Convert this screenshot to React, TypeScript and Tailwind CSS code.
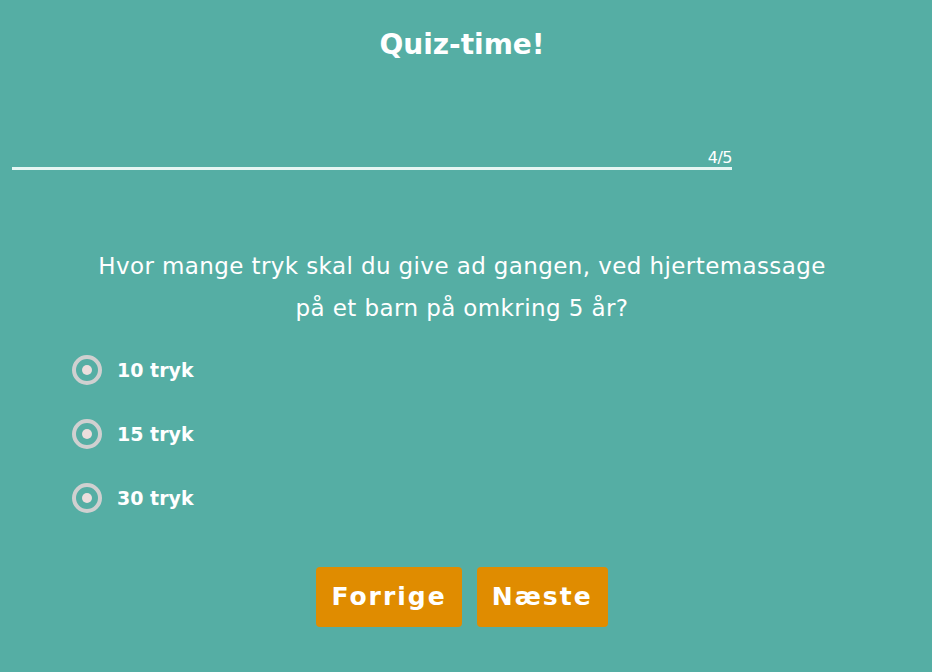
import { useState } from 'react';

const options = ['10 tryk', '15 tryk', '30 tryk'];

export default function App() {
  const [picked, setPicked] = useState<number | null>(null);

  return (
    <div
      className="min-h-screen w-full bg-[#55aea4] text-white pr-2"
      style={{ fontFamily: '"DejaVu Sans", "Open Sans", sans-serif' }}
    >
      <h1 className="pt-[25px] text-center text-[28px] font-bold leading-[40px]">Quiz-time!</h1>

      {/* progress */}
      <div className="ml-3 mt-[84px] w-[720px] flex flex-col items-end">
        <span className="text-[16px] leading-[18px] tracking-[-0.5px]">4/5</span>
        <div className="h-[3px] w-full bg-[#e6f6f3]" />
      </div>

      <p className="mt-[75px] text-center text-[23px] leading-[42px] tracking-[0.4px]">
        Hvor mange tryk skal du give ad gangen, ved hjertemassage
        <br />
        på et barn på omkring 5 år?
      </p>

      <div className="mt-[26px] ml-[72px] flex flex-col gap-[34px]">
        {options.map((o, i) => (
          <label key={o} className="flex items-center gap-[15px] cursor-pointer" onClick={() => setPicked(i)}>
            <span className="flex h-[30px] w-[30px] items-center justify-center rounded-full border-[4px] border-[#d0d0d0]">
              <span className={`h-[10px] w-[10px] rounded-full ${picked === i ? 'bg-white' : 'bg-[#ecdedd]'}`} />
            </span>
            <span className="text-[19px] font-bold">{o}</span>
          </label>
        ))}
      </div>

      <div className="mt-[54px] flex justify-center gap-[15px]">
        <button className="h-[60px] rounded-[4px] bg-[#e08c00] px-[15px] text-[25px] font-bold tracking-[2px]">
          Forrige
        </button>
        <button className="h-[60px] rounded-[4px] bg-[#e08c00] px-[15px] text-[25px] font-bold tracking-[2px]">
          Næste
        </button>
      </div>
    </div>
  );
}
